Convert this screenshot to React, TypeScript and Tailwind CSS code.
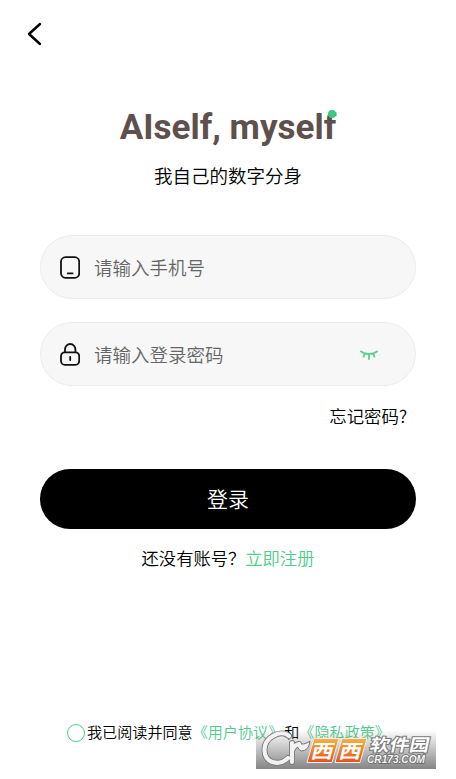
import { useState } from "react";

function BackIcon() {
  return (
    <svg width="16" height="24" viewBox="0 0 16 24" fill="none" stroke="#000" strokeWidth="2.4" strokeLinecap="round" strokeLinejoin="round">
      <path d="M14 2 3 12 14 22" />
    </svg>
  );
}

function PhoneIcon() {
  return (
    <svg className="mt-[1px]" width="20" height="24" viewBox="0 0 20 24" fill="none" stroke="#111" strokeWidth="1.8" strokeLinecap="round">
      <rect x="1" y="1.2" width="18.2" height="20.6" rx="4.5" />
      <path d="M7.8 17.4h4.8" />
    </svg>
  );
}

function LockIcon() {
  return (
    <svg className="mt-[1px]" width="20" height="24" viewBox="0 0 20 24" fill="none" stroke="#111" strokeWidth="1.8" strokeLinecap="round">
      <rect x="1" y="9.3" width="18.2" height="12.5" rx="3.8" />
      <path d="M5 9.2V6.2a5.2 5.2 0 0 1 10.4 0v3M10.2 14v3" />
    </svg>
  );
}

function ClosedEyeIcon() {
  return (
    <svg width="18" height="11" viewBox="0 0 18 11" fill="none" stroke="#5ccd94" strokeWidth="1.8" strokeLinecap="round">
      <path d="M1 1.4c4.4 3.2 11.6 3.2 16 0M9 4v5M4.8 3.6 3.6 6.6M13.2 3.6l1.2 3" />
    </svg>
  );
}

function Watermark() {
  return (
    <div className="absolute left-[256px] top-[730px] h-[39px] w-[180px] bg-linear-to-b from-[#80808000] to-[#858585]">
      <svg className="block" width="180" height="39" viewBox="0 0 180 39">
        <defs>
          <linearGradient id="tile" x1="0" y1="0" x2="0" y2="1">
            <stop offset="0" stopColor="#f6b23c" />
            <stop offset="1" stopColor="#e6501d" />
          </linearGradient>
        </defs>
        <g strokeLinecap="round" strokeLinejoin="round">
          <path d="M33 6C25-1 8 7 8.500 20.500 9 34 24 36 32 28M36 32V13M36 21Q38 15 43 14" fill="none" stroke="#777" strokeWidth="6" />
          <path d="M41 13Q48 16 54 11Q53 21 45 21Q41 19 41 13z" fill="#f2f2f2" stroke="#777" strokeWidth="1" />
          <path d="M33 6C25-1 8 7 8.500 20.500 9 34 24 36 32 28M36 32V13M36 21Q38 15 43 14" fill="none" stroke="#f2f2f2" strokeWidth="4.2" />
        </g>
        <g stroke="#eee" strokeWidth="1" strokeLinejoin="round">
          <path d="M58 8.500h25l-7 24H51z" fill="url(#tile)" />
          <path d="M86 8.500h25l-7 24H79z" fill="url(#tile)" />
        </g>
        <g className="font-['Noto_Sans_CJK_SC',sans-serif] font-bold" fill="#fff">
          <text transform="translate(54 27.500) skewX(-14) scale(1.18 1)" fontSize="19">西</text>
          <text transform="translate(82 27.500) skewX(-14) scale(1.18 1)" fontSize="19">西</text>
          <text transform="translate(113 21) skewX(-12) scale(1.16 1)" fontSize="17" stroke="#777" strokeWidth="2" paintOrder="stroke">软件园</text>
        </g>
        <text x="111" y="33" fontSize="10.5" textLength="58" lengthAdjust="spacingAndGlyphs" fill="#f5f5f5" stroke="#666" strokeWidth="1.5" paintOrder="stroke" className="font-['Liberation_Sans',sans-serif] font-bold italic">CR173.COM</text>
      </svg>
    </div>
  );
}

export default function App() {
  const [agreed, setAgreed] = useState(false);
  return (
    <main className="relative flex h-[779px] w-[456px] flex-col overflow-hidden bg-white font-['Roboto','Noto_Sans_CJK_SC',sans-serif] text-black">
      <header className="flex h-[68px] items-center pl-[26px]">
        <button aria-label="返回"><BackIcon /></button>
      </header>

      <section className="flex h-[167px] flex-col items-center pt-[40px]">
        <h1 className="relative h-[40px] whitespace-nowrap text-[35px] font-bold leading-[40px] text-[#5e504d]">
          AIself, myself
          <span className="absolute right-0 top-[2px] size-[8px] rounded-full bg-[#3ac982]" />
        </h1>
        <p className="mt-[15px] text-[18.5px] font-[350] leading-[28px]">我自己的数字分身</p>
      </section>

      <form className="flex flex-col px-10" onSubmit={(e) => e.preventDefault()}>
        <label className="flex h-[64px] w-[376px] items-center rounded-full border border-[#ececec] bg-[#f7f7f7] pl-[19px]">
          <PhoneIcon />
          <input className="ml-[14px] w-[240px] bg-transparent pt-[5px] text-[18.5px] font-[350] outline-none placeholder:text-[#666]" placeholder="请输入手机号" />
        </label>
        <label className="mt-[23px] flex h-[64px] w-[376px] items-center rounded-full border border-[#ececec] bg-[#f7f7f7] pl-[19px]">
          <LockIcon />
          <input type="password" className="ml-[14px] w-[240px] bg-transparent pt-[5px] text-[18.5px] font-[350] outline-none placeholder:text-[#666]" placeholder="请输入登录密码" />
          <button type="button" className="ml-[26px] pt-[2px]" aria-label="显示密码"><ClosedEyeIcon /></button>
        </label>
        <a className="mt-[17px] self-end pr-[9px] font-['Noto_Sans_CJK_SC',sans-serif] text-[17.4px] font-[350] leading-[26px]">忘记密码?</a>
        <button className="mt-[40px] h-[60px] w-[376px] rounded-full bg-black pt-[3px] text-[21px] font-[350] text-white">登录</button>
      </form>

      <p className="mt-[17px] flex h-[26px] justify-center whitespace-nowrap text-[17.3px] font-[350] leading-[26px]">
        还没有账号？<a className="text-[#4fcb8d]">立即注册</a>
      </p>

      <div className="mt-[148px] flex h-[26px] items-center whitespace-nowrap pl-[67px] text-[15.1px] font-[350] leading-[26px]">
        <button aria-label="同意协议" onClick={() => setAgreed(!agreed)} className={agreed ? "size-[18px] rounded-full bg-[#4fcb8d]" : "size-[18px] rounded-full border border-[#4fcb8d]"} />
        <span className="ml-[2px]">我已阅读并同意</span>
        <a className="text-[#4fcb8d]">《用户协议》</a>
        <span className="ml-[1px]">和</span>
        <a className="text-[#4fcb8d]">《隐私政策》</a>
      </div>
      <Watermark />
    </main>
  );
}
